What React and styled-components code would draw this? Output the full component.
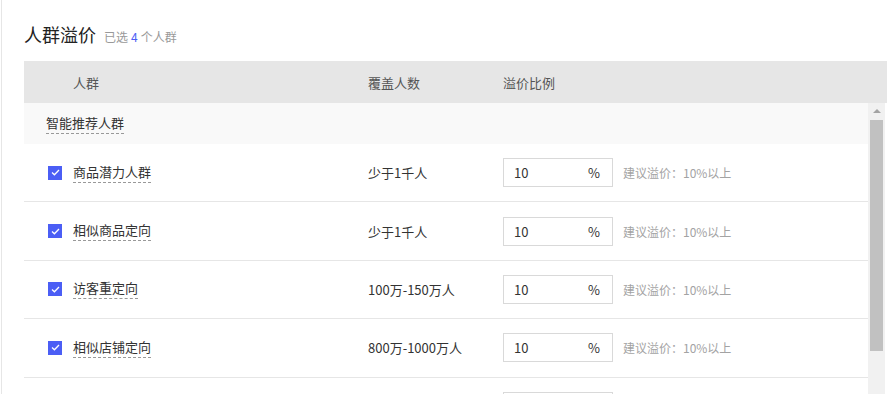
import React from "react";
import styled, { createGlobalStyle } from "styled-components";

const GlobalStyle = createGlobalStyle`
  html, body {
    margin: 0;
    padding: 0;
    background: #fff;
    overflow: hidden;
  }
  body {
    font-family: "Noto Sans CJK SC", "Noto Sans", "Liberation Sans", sans-serif;
    color: #333;
  }
`;

const Page = styled.div`
  margin-left: 1px;
  border-left: 1px solid #e6e6e6;
  padding: 19px 0 0 22px;
  height: 394px;
  box-sizing: border-box;
`;

const TitleBar = styled.div`
  display: flex;
  align-items: baseline;
  height: 42px;
`;

const Title = styled.h2`
  margin: 0;
  font-size: 18px;
  font-weight: 400;
  color: #222;
  line-height: 30px;
`;

const Sub = styled.span`
  margin-left: 8px;
  font-size: 12px;
  color: #999;

  b {
    font-weight: 400;
    color: #4b5ef5;
    margin: 0 3px;
  }
`;

const Table = styled.div`
  width: 863px;
`;

const Head = styled.div`
  display: grid;
  grid-template-columns: 344px 135px 1fr;
  height: 42px;
  align-items: center;
  background: #e6e6e6;
  font-size: 13px;
  color: #555;
`;

const HeadCell = styled.div`
  padding-left: ${(p) => p.$indent || 0}px;
`;

const Body = styled.div`
  display: flex;
  margin-right: 2px;
  height: 291px;
  overflow: hidden;
`;

const List = styled.div`
  flex: 1;
`;

const Group = styled.div`
  height: 41px;
  display: flex;
  align-items: center;
  padding-left: 22px;
  background: #f9f9f9;
  font-size: 13px;
  color: #333;
`;

const Dashed = styled.span`
  border-bottom: 1px dashed #999;
  line-height: 18px;
  padding-bottom: 1px;
`;

const Row = styled.div`
  display: grid;
  grid-template-columns: 344px 135px 1fr;
  align-items: center;
  height: 58.4px;
  box-sizing: border-box;
  border-bottom: 1px solid #e6e6e6;
  font-size: 13px;
  color: #333;
`;

const NameCell = styled.div`
  display: flex;
  align-items: center;
  padding-left: 24px;
  gap: 11px;
`;

const Check = styled.span`
  width: 14px;
  height: 14px;
  background: #4b5ef5;
  display: inline-flex;
  align-items: center;
  justify-content: center;
`;

const PriceCell = styled.div`
  display: flex;
  align-items: center;
`;

const InputBox = styled.div`
  width: 110px;
  height: 29px;
  box-sizing: border-box;
  border: 1px solid #d9d9d9;
  display: flex;
  align-items: center;
  justify-content: space-between;
  padding: 0 12px 0 10px;
  font-size: 13px;
  color: #333;
`;

const Hint = styled.span`
  margin-left: 10px;
  font-size: 12px;
  color: #a3a3a3;
`;

const Scrollbar = styled.div`
  width: 17px;
  background: #f1f1f1;
  display: flex;
  flex-direction: column;
  align-items: center;
`;

const Arrow = styled.div`
  margin-top: 6px;
  width: 0;
  height: 0;
  border-left: 4px solid transparent;
  border-right: 4px solid transparent;
  border-bottom: 4px solid #a3a3a3;
`;

const Thumb = styled.div`
  margin-top: 7px;
  width: 13px;
  height: 231px;
  background: #c1c1c1;
`;

const rows = [
  { name: "商品潜力人群", cover: "少于1千人" },
  { name: "相似商品定向", cover: "少于1千人" },
  { name: "访客重定向", cover: "100万-150万人" },
  { name: "相似店铺定向", cover: "800万-1000万人" },
  { name: "店铺优质人群", cover: "少于1千人" },
];

const Tick = () => (
  <svg width="9" height="7" viewBox="0 0 9 7">
    <path d="M1 3.6 L3.4 5.8 L8 1" fill="none" stroke="#fff" strokeWidth="1.3" />
  </svg>
);

export default function App() {
  return (
    <>
      <GlobalStyle />
      <Page>
        <TitleBar>
          <Title>人群溢价</Title>
          <Sub>
            已选<b>4</b>个人群
          </Sub>
        </TitleBar>
        <Table>
          <Head>
            <HeadCell $indent={49}>人群</HeadCell>
            <HeadCell>覆盖人数</HeadCell>
            <HeadCell>溢价比例</HeadCell>
          </Head>
          <Body>
            <List>
              <Group>
                <Dashed>智能推荐人群</Dashed>
              </Group>
              {rows.map((r) => (
                <Row key={r.name}>
                  <NameCell>
                    <Check>
                      <Tick />
                    </Check>
                    <Dashed>{r.name}</Dashed>
                  </NameCell>
                  <div>{r.cover}</div>
                  <PriceCell>
                    <InputBox>
                      <span>10</span>
                      <span>%</span>
                    </InputBox>
                    <Hint>建议溢价：10%以上</Hint>
                  </PriceCell>
                </Row>
              ))}
            </List>
            <Scrollbar>
              <Arrow />
              <Thumb />
            </Scrollbar>
          </Body>
        </Table>
      </Page>
    </>
  );
}
